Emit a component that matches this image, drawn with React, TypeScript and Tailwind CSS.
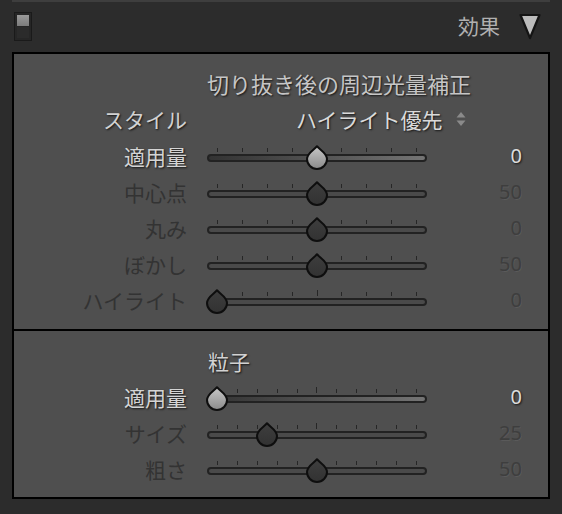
import React from "react";

type SliderRow = {
  label: string;
  value: number;
  min: number;
  max: number;
  active: boolean;
};

const VIGNETTE: SliderRow[] = [
  { label: "適用量", value: 0, min: -100, max: 100, active: true },
  { label: "中心点", value: 50, min: 0, max: 100, active: false },
  { label: "丸み", value: 0, min: -100, max: 100, active: false },
  { label: "ぼかし", value: 50, min: 0, max: 100, active: false },
  { label: "ハイライト", value: 0, min: 0, max: 100, active: false },
];

const GRAIN: SliderRow[] = [
  { label: "適用量", value: 0, min: 0, max: 100, active: true },
  { label: "サイズ", value: 25, min: 0, max: 100, active: false },
  { label: "粗さ", value: 50, min: 0, max: 100, active: false },
];

const FONT = "font-['Noto_Sans_CJK_JP','Noto_Sans',sans-serif]";
const SHADOW_DARK = "[text-shadow:1px_1px_2px_rgba(0,0,0,0.75)]";

function Thumb({ active }: { active: boolean }) {
  const id = active ? "thumbOn" : "thumbOff";
  return (
    <svg width="22" height="25" viewBox="0 0 22 25">
      <defs>
        <linearGradient id={id} x1="0" y1="0" x2="0" y2="1">
          <stop offset="0" stopColor={active ? "#c8c8c8" : "#3e3e3e"} />
          <stop offset="1" stopColor={active ? "#8a8a8a" : "#323232"} />
        </linearGradient>
      </defs>
      <path
        d="M11 1.2 C13.5 4.5 21 8 21 14 A10 10 0 0 1 1 14 C1 8 8.5 4.5 11 1.2 Z"
        fill={`url(#${id})`}
        stroke="#0e0e0e"
        strokeWidth="2"
        strokeLinejoin="round"
      />
    </svg>
  );
}

function Slider({ row, ticks }: { row: SliderRow; ticks: number }) {
  const frac = (row.value - row.min) / (row.max - row.min);
  const left = 10 + frac * 200 - 11;
  const mid = Math.floor(ticks / 2);
  return (
    <div className="relative w-[220px] h-[24px]">
      <div className="absolute left-[10px] right-[10px] top-[2px] h-[6px] flex justify-between items-end">
        {Array.from({ length: ticks }).map((_, i) => (
          <div key={i} className={`w-px bg-[#262626] ${i === mid ? "h-[6px]" : "h-[4px]"}`} />
        ))}
      </div>
      <div
        className={`absolute left-0 right-0 top-[10px] h-[8px] rounded-full border-2 border-[#222222] ${
          row.active ? "bg-gradient-to-r from-[#333333] to-[#747474]" : "bg-[#4a4a4a]"
        }`}
      />
      <div className="absolute top-[1px]" style={{ left }}>
        <Thumb active={row.active} />
      </div>
    </div>
  );
}

function Row({ row, ticks }: { row: SliderRow; ticks: number }) {
  return (
    <div className="flex items-center h-[36px]">
      <div
        className={`w-[173px] text-right text-[21px] leading-none ${
          row.active ? `text-[#d4d4d4] ${SHADOW_DARK}` : "text-[#333333]"
        }`}
      >
        {row.label}
      </div>
      <div className="ml-[20px]">
        <Slider row={row} ticks={ticks} />
      </div>
      <div
        className={`w-[95px] text-right text-[20px] leading-none font-['Noto_Sans',sans-serif] ${
          row.active
            ? `text-[#dcdcdc] ${SHADOW_DARK}`
            : "text-[#3e3e3e] [text-shadow:1px_1px_0_rgba(255,255,255,0.06)]"
        }`}
      >
        {row.value}
      </div>
    </div>
  );
}

export default function App() {
  return (
    <div className={`w-[562px] h-[514px] bg-[#2c2c2c] ${FONT} overflow-hidden`}>
      <div className="mx-[12px] h-[2px] bg-[#3e3e3e]" />

      {/* header */}
      <div className="h-[50px] flex items-center pl-[14px] pr-[21px]">
        <div className="w-[18px] h-[29px] -mt-[2px] bg-[#262626] border border-[#1a1a1a] p-[2px] flex flex-col">
          <div className="h-[11px] bg-gradient-to-b from-[#9a9a9a] to-[#7c7c7c]" />
          <div className="flex-1 bg-[#2b2b2b] mt-px" />
        </div>
        <span className="ml-auto text-[21px] text-[#b0b0b0] leading-none -mt-[3px]">効果</span>
        <svg className="ml-[19px] -mt-[2px]" width="22" height="27" viewBox="0 0 22 27">
          <path d="M1.5 2 L20.5 2 L11 25 Z" fill="#bcbcbc" stroke="#141414" strokeWidth="2.2" strokeLinejoin="round" />
        </svg>
      </div>

      {/* panel */}
      <div className="ml-[12px] w-[538px] border-2 border-black bg-[#4f4f4f]">
        <div className="pt-[11px] pb-[11px]">
          <div className="h-[36px] flex items-center pl-[193px]">
            <span className={`text-[22px] leading-none text-[#c6c6c6] ${SHADOW_DARK}`}>
              切り抜き後の周辺光量補正
            </span>
          </div>
          <div className="h-[37px] flex items-center">
            <div className={`w-[173px] text-right text-[21px] leading-none text-[#d2d2d2] ${SHADOW_DARK}`}>
              スタイル
            </div>
            <div className="ml-[109px] flex items-center">
              <span className={`text-[21px] leading-none text-[#dadada] ${SHADOW_DARK}`}>ハイライト優先</span>
              <svg className="ml-[13px]" width="10" height="15" viewBox="0 0 10 15">
                <path d="M5 0 L9.5 5.5 L0.5 5.5 Z" fill="#8a8a8a" />
                <path d="M5 14 L9.5 8.5 L0.5 8.5 Z" fill="#8a8a8a" />
              </svg>
            </div>
          </div>
          {VIGNETTE.map((r) => (
            <Row key={r.label} row={r} ticks={9} />
          ))}
        </div>

        <div className="h-[2px] bg-black" />

        <div className="pt-[12px] pb-[10px]">
          <div className="h-[36px] flex items-center pl-[194px]">
            <span className={`text-[21px] leading-none text-[#d2d2d2] ${SHADOW_DARK}`}>粒子</span>
          </div>
          {GRAIN.map((r) => (
            <Row key={r.label} row={r} ticks={11} />
          ))}
        </div>
      </div>
    </div>
  );
}
